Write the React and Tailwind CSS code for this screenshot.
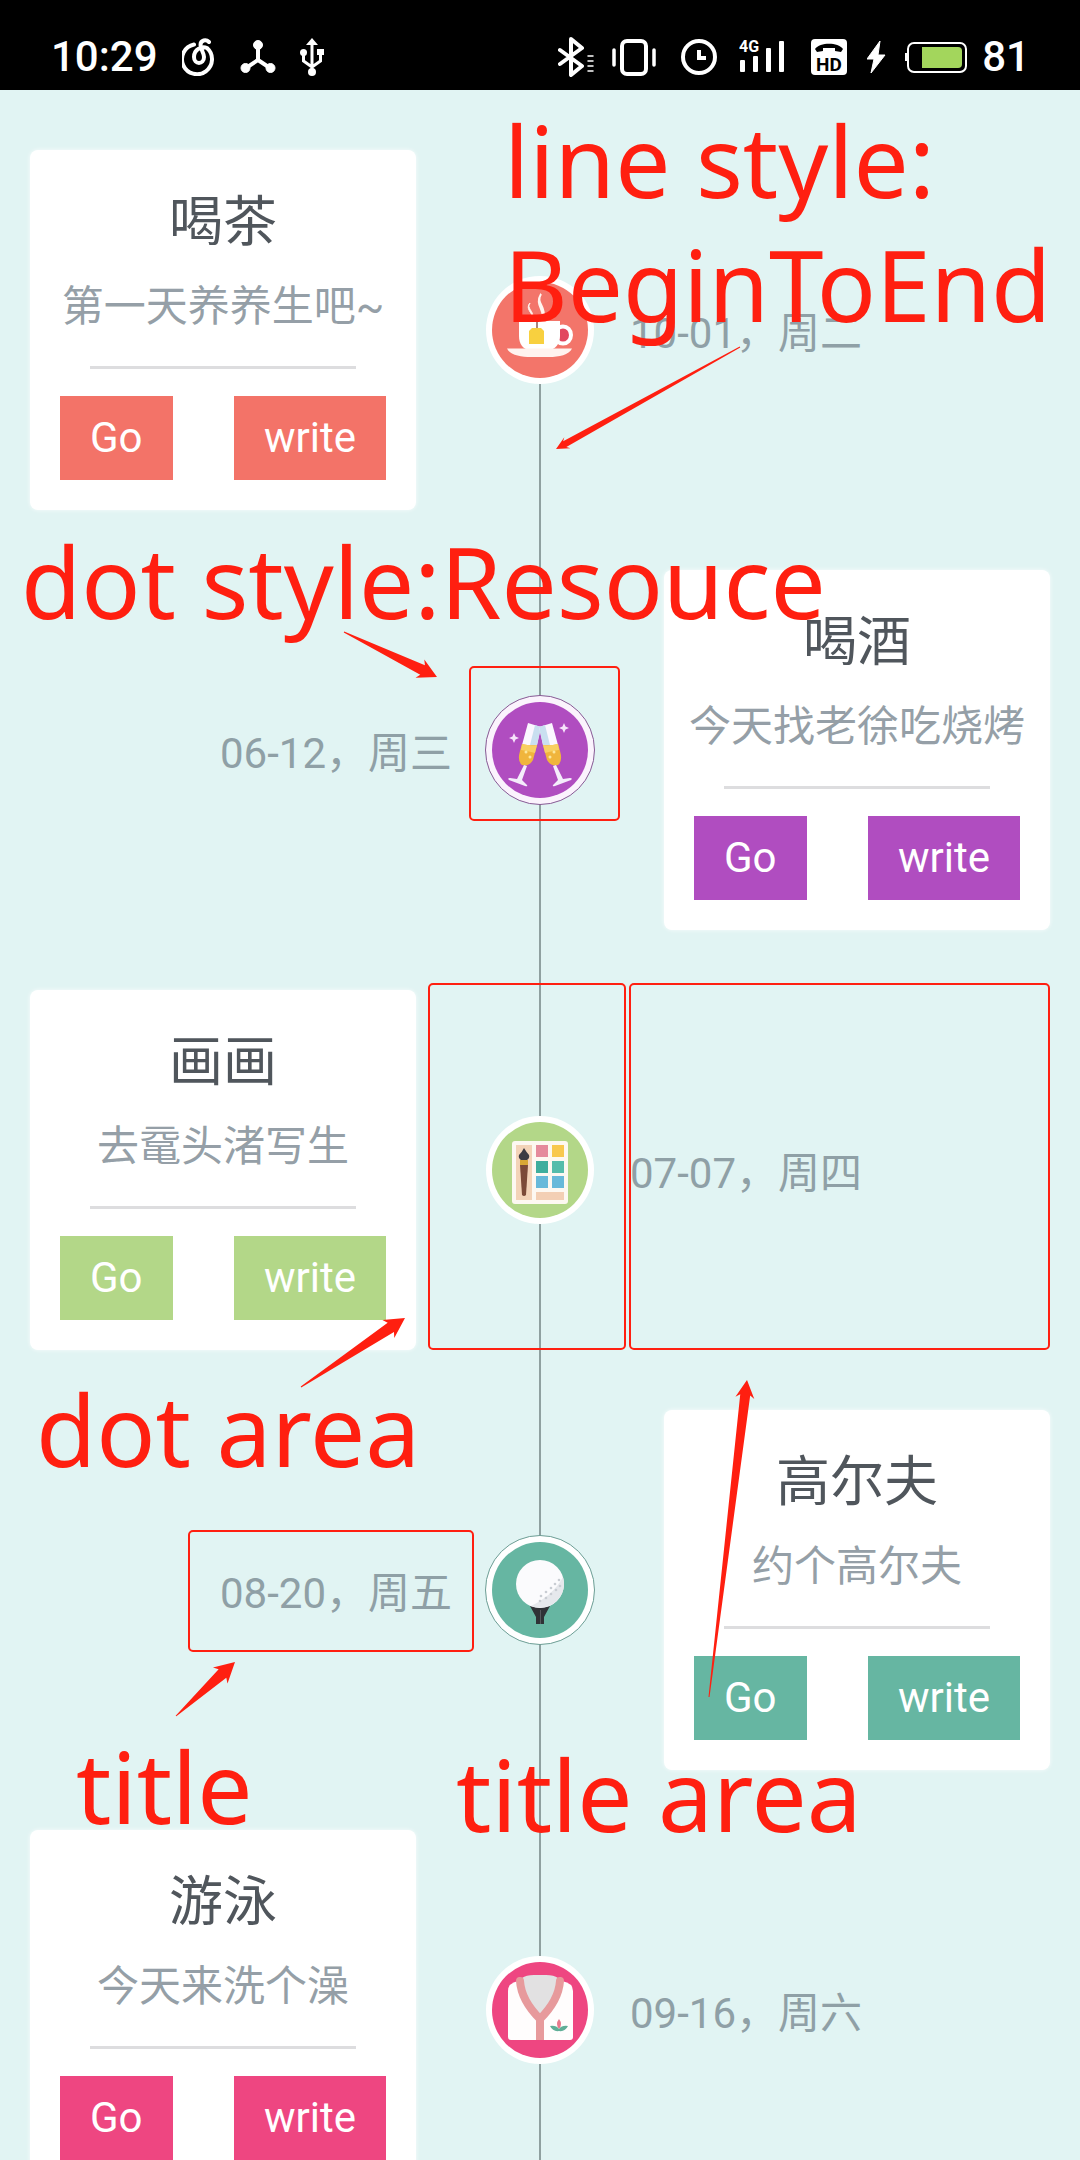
import React from "react";

const RED = "#ff1f10";

/* ---------- status bar icons ---------- */

function MusicIcon() {
  return (
    <svg width="34" height="38" viewBox="0 0 34 38" fill="none" stroke="#fff" strokeWidth="4" strokeLinecap="round">
      <path d="M12 6.500A15 15 0 1 0 25 10C20 8 12 11 12 19C12 27 22 27 22 19C22 15 18.500 11 18.500 7C18.500 2 24 1 27 4" />
    </svg>
  );
}

function HubIcon() {
  return (
    <svg width="36" height="38" viewBox="0 0 36 38" fill="#fff" stroke="#fff">
      <path d="M18 7V22L6 30M18 22L30 30" fill="none" strokeWidth="4" />
      <circle cx="18" cy="7" r="4.500" />
      <circle cx="5.500" cy="30" r="4.500" />
      <circle cx="30.500" cy="30" r="4.500" />
    </svg>
  );
}

function UsbIcon() {
  return (
    <svg width="24" height="38" viewBox="0 0 24 38" fill="#fff">
      <path d="M12 0L18 7H6Z" />
      <circle cx="12" cy="34" r="4" />
      <circle cx="3.500" cy="14.500" r="3.500" />
      <rect x="17" y="11" width="7" height="6" />
      <path d="M12 6V33M3.500 14V23L12 29M20.500 15V23L12 29" fill="none" stroke="#fff" strokeWidth="3" />
    </svg>
  );
}

function BluetoothIcon() {
  return (
    <svg width="39" height="40" viewBox="0 0 39 40" fill="none" stroke="#fff" strokeWidth="4" strokeLinejoin="round" strokeLinecap="round">
      <path d="M2 13L24 29L13 38V2L24 11L2 27" />
      <path d="M30 19H35M30 24H35M30 29H35M30 34H35" strokeWidth="1.500" />
    </svg>
  );
}

function VibrateIcon() {
  return (
    <svg width="54" height="38" viewBox="0 0 54 38" fill="none" stroke="#fff" strokeLinecap="round">
      <rect x="10" y="3" width="24" height="33" rx="5" strokeWidth="4" />
      <path d="M2 12V27M42 12V27" strokeWidth="3.500" />
    </svg>
  );
}

function ClockIcon() {
  return (
    <svg width="43" height="38" viewBox="0 0 43 38" fill="none" stroke="#fff" strokeWidth="4">
      <circle cx="18" cy="19" r="16" />
      <path d="M18 12V20H25" />
    </svg>
  );
}

function SignalIcon() {
  return (
    <svg width="57" height="38" viewBox="0 0 57 38" fill="#fff">
      <text x="0" y="14" fontSize="16" fontWeight="700" fontFamily="Roboto, sans-serif">4G</text>
      <rect x="1" y="22" width="5" height="12" rx="1" />
      <rect x="14" y="18" width="5" height="16" rx="1" />
      <rect x="27" y="10" width="5" height="24" rx="1" />
      <rect x="40" y="3" width="5" height="31" rx="1" />
    </svg>
  );
}

function HdIcon() {
  return (
    <svg width="41" height="38" viewBox="0 0 41 38">
      <rect x="0" y="1" width="36" height="36" rx="4" fill="#fff" />
      <path d="M4 11C9 4 27 4 32 11L30 14L24 13V10H12V13L6 14Z" fill="#000" />
      <text x="18" y="33" textAnchor="middle" fontSize="19" fontWeight="700" fontFamily="Roboto, sans-serif" fill="#000">HD</text>
    </svg>
  );
}

function BoltIcon() {
  return (
    <svg width="23" height="38" viewBox="0 0 23 38" fill="#fff">
      <path d="M13 3L0 21H7L4 35L18 17H11Z" stroke="#fff" strokeWidth="1" />
    </svg>
  );
}

function BatteryIcon() {
  return (
    <svg width="62" height="38" viewBox="0 0 62 38">
      <rect x="3" y="5" width="58" height="29" rx="6" fill="none" stroke="#fff" strokeWidth="2" />
      <rect x="0" y="15" width="3" height="8" fill="#fff" />
      <path d="M17 9H53Q57 9 57 13V26Q57 30 53 30H17Z" fill="#a3d65c" />
    </svg>
  );
}

/* ---------- timeline dots ---------- */

function Dot({ color, rim, ring = "#ffffff", label, children }) {
  return (
    <svg className="relative" width="112" height="112" viewBox="0 0 112 112" role="img" aria-label={label}>
      <circle cx="56" cy="56" r="54" fill={ring} />
      {rim && <circle cx="56" cy="56" r="54.500" fill="none" stroke={rim} strokeWidth="1" />}
      <circle cx="56" cy="56" r="48" fill={color} />
      {children}
    </svg>
  );
}

function TeaDot() {
  return (
    <Dot color="#f3756a" label="tea">
      <path d="M57 20C51 29 63 33 59 43C59 34 51 30 57 20Z" fill="#fff5ef" stroke="#fff5ef" strokeWidth="2" />
      <path d="M46 29C42 34 50 37 49 44C48 38 41 35 46 29Z" fill="#fff5ef" stroke="#fff5ef" strokeWidth="1" />
      <ellipse cx="79" cy="61" rx="8" ry="8.500" fill="#e2475f" stroke="#fff" strokeWidth="4" />
      <path d="M35 47H76V62C76 70 71 76 64 76H47C39 76 35 70 35 62Z" fill="#fff" />
      <path d="M23 74.500H88C85 81 75 83 65 83H47C37 83 26 81 23 74.500Z" fill="#fff3ef" />
      <path d="M53 47V56" stroke="#8a5b52" strokeWidth="1.500" />
      <path d="M48 54H57L60 57V70H45V57Z" fill="#f8d03f" />
    </Dot>
  );
}

function Glass() {
  return (
    <g>
      <path d="M44 29L57 33L53 51H38Z" fill="#fbf7ff" />
      <path d="M51 31L57 33L53 51H46Z" fill="#c9dff0" />
      <path d="M38 50Q46 52 53 51L49 66Q45 73 38 71Q33 67 36 57Z" fill="#f0b53c" />
      <path d="M38 50Q46 52 53 51L51 59Q44 57 37 56Z" fill="#f8cf62" />
      <circle cx="42" cy="58" r="1.500" fill="#fce79c" />
      <circle cx="46" cy="63" r="1.500" fill="#fce79c" />
      <path d="M40 71L43 72L38 86L43 91Q44 93 41 92L25 86Q23 84 26 84L33 85Z" fill="#f4ecfb" />
    </g>
  );
}

function WineDot() {
  return (
    <Dot color="#b04dc0" rim="#8a5a96" ring="#fbf3fd" label="champagne">
      <Glass />
      <g transform="matrix(-1 0 0 1 112 0)">
        <Glass />
      </g>
      <path d="M80 29L81.500 32.500L85 34L81.500 35.500L80 39L78.500 35.500L75 34L78.500 32.500Z" fill="#f6e4fa" />
      <path d="M30 39L31.500 42.500L35 44L31.500 45.500L30 49L28.500 45.500L25 44L28.500 42.500Z" fill="#f6e4fa" />
    </Dot>
  );
}

function PaintDot() {
  return (
    <Dot color="#b3d788" label="paint box">
      <rect x="28" y="27" width="56" height="63" rx="3" fill="#fdf8f1" />
      <rect x="32" y="31" width="16" height="55" fill="#f3d3b8" />
      <rect x="52" y="31" width="12" height="12" fill="#e58a9c" />
      <rect x="68" y="31" width="12" height="12" fill="#f8c84e" />
      <rect x="52" y="47" width="12" height="12" fill="#3fae9d" />
      <rect x="68" y="47" width="12" height="12" fill="#55bcab" />
      <rect x="52" y="62" width="12" height="12" fill="#68b9da" />
      <rect x="68" y="62" width="12" height="12" fill="#68b9da" />
      <rect x="52" y="78" width="28" height="8" fill="#f3cfb4" />
      <path d="M40 34Q43 39 45 41Q46 44 43 46H37Q34 44 35 41Q38 38 40 34Z" fill="#3c3a42" />
      <rect x="36" y="46" width="8" height="5" fill="#d9a835" />
      <path d="M36 51H44L42 81Q40 83 38 81Z" fill="#7c4a38" />
    </Dot>
  );
}

function GolfDot() {
  return (
    <Dot color="#66b6a2" rim="#6f9f96" label="golf ball">
      <path d="M46 72H66L60 83V90H52V83Z" fill="#2f3236" />
      <path d="M56.500 76V90" stroke="#55595d" strokeWidth="1" />
      <circle cx="56" cy="50" r="24" fill="#fbfbfd" />
      <path d="M79 43A24 24 0 0 1 47 72C60 66 72 56 79 43Z" fill="#e6e8ec" />
      <g fill="#c9cdd3">
        <circle cx="75" cy="46" r="1.300" />
        <circle cx="71" cy="50" r="1.300" />
        <circle cx="76" cy="52" r="1.300" />
        <circle cx="67" cy="54" r="1.300" />
        <circle cx="72" cy="56" r="1.300" />
        <circle cx="62" cy="58" r="1.300" />
        <circle cx="67" cy="60" r="1.300" />
        <circle cx="57" cy="62" r="1.300" />
        <circle cx="62" cy="64" r="1.300" />
        <circle cx="56" cy="67" r="1.300" />
      </g>
    </Dot>
  );
}

function RobeDot() {
  return (
    <Dot color="#ee4681" label="bathrobe">
      <path d="M34 27Q24 29 24 37V83Q24 86 27 86H86Q89 86 89 83V37Q89 29 78 27Z" fill="#fffdfd" />
      <path d="M38 24Q42 21 50 21H62Q70 21 74 24Q72 48 56 64Q40 48 38 24Z" fill="#e2e1e2" />
      <path d="M36 27C37 42 45 54 56 65C67 54 75 42 76 27" fill="none" stroke="#e79a9c" strokeWidth="8" strokeLinecap="round" />
      <rect x="52" y="63" width="8" height="23" fill="#e79a9c" />
      <path d="M75 65Q79 70 75 75Q71 70 75 65Z" fill="#e9788c" />
      <path d="M66 72Q72 71 75 75Q78 71 84 72Q81 78 75 77Q69 78 66 72Z" fill="#5fae97" />
    </Dot>
  );
}

/* ---------- timeline ---------- */

const items = [
  { title: "喝茶", note: "第一天养养生吧~", date: "10-01，周二", tint: "bg-[#f37368]", Icon: TeaDot },
  { title: "喝酒", note: "今天找老徐吃烧烤", date: "06-12，周三", tint: "bg-[#b04dc0]", Icon: WineDot, dotFrame: "mark" },
  { title: "画画", note: "去鼋头渚写生", date: "07-07，周四", tint: "bg-[#b3d788]", Icon: PaintDot, dotFrame: "area", titleArea: true },
  { title: "高尔夫", note: "约个高尔夫", date: "08-20，周五", tint: "bg-[#66b6a2]", Icon: GolfDot, titleMark: true },
  { title: "游泳", note: "今天来洗个澡", date: "09-16，周六", tint: "bg-[#ee4681]", Icon: RobeDot },
];

const frame = "pointer-events-none absolute rounded-[5px] border-2 border-[#ff1f10]";

function Card({ item }) {
  const button = "m-[30px] px-[30px] h-[84px] text-[42px] leading-[48px] text-white " + item.tint;
  return (
    <article className="flex flex-col rounded-lg bg-white pt-[33px] text-center shadow-[0_0_4px_rgba(255,255,255,0.8)]">
      <h2 className="text-[54px] leading-[80px] text-[#50565c]">{item.title}</h2>
      <p className="mt-3.5 whitespace-nowrap text-[42px] leading-[60px] text-[#959fa7]">{item.note}</p>
      <hr className="mx-[60px] mt-[29px] border-t-[3px] border-[#dddddf]" />
      <div className="-mt-[3px] flex justify-between">
        <button type="button" className={button}>Go</button>
        <button type="button" className={button}>write</button>
      </div>
    </article>
  );
}

function Row({ item, index }) {
  const cardLeft = index % 2 === 0;
  const { Icon } = item;
  const first = index === 0;
  const card = (
    <div className={cardLeft ? "mr-[34px]" : "ml-[34px]"}>
      <Card item={item} />
    </div>
  );
  const date = (
    <div className={"relative flex items-center pt-2 " + (cardLeft ? "justify-start" : "-mr-0.5 justify-end")}>
      <time className="relative whitespace-nowrap text-[42px] leading-[60px] text-[#8fa0a6]">
        {item.date}
        {item.titleMark && <span className={frame + " -left-8 -right-[22px] -top-[34px] -bottom-7"} />}
      </time>
      {item.titleArea && <span className={frame + " -left-px right-0 -top-[7px] bottom-0"} />}
    </div>
  );
  return (
    <li className="grid grid-cols-[1fr_180px_1fr] pb-[60px]">
      {cardLeft ? card : date}
      <div className="relative flex items-center justify-center">
        <span className={"absolute -bottom-[60px] left-1/2 w-[2px] -translate-x-1/2 bg-[#8fa0a0] " + (first ? "top-1/2" : "top-0")} />
        <Icon />
        {item.dotFrame === "mark" && <span className={frame + " left-[19px] right-[10px] top-[96px] bottom-[109px]"} />}
        {item.dotFrame === "area" && <span className={frame + " -left-[22px] right-1 -top-[7px] bottom-0"} />}
      </div>
      {cardLeft ? date : card}
    </li>
  );
}

/* ---------- callouts over the timeline ---------- */

function Arrow({ from, to, head = 16 }) {
  const [x1, y1] = from;
  const [x2, y2] = to;
  const len = Math.hypot(x2 - x1, y2 - y1);
  const angle = (Math.atan2(y2 - y1, x2 - x1) * 180) / Math.PI;
  const w = head / 3;
  const points = [
    [0, -0.5], [len - head, -w], [len - head - 3, -w * 1.9], [len, 0],
    [len - head - 3, w * 1.9], [len - head, w], [0, 0.5],
  ].join(" ");
  return <polygon points={points} fill={RED} transform={`translate(${x1} ${y1}) rotate(${angle})`} />;
}

function Label({ place, children }) {
  return (
    <span className={"absolute whitespace-nowrap font-['Noto_Sans','Open_Sans',sans-serif] text-[98px] leading-[124px] text-[#ff1f10] " + place}>
      {children}
    </span>
  );
}

function Callouts() {
  return (
    <div className="pointer-events-none absolute inset-0">
      <Label place="left-[504px] top-[8px]">line style:<br />BeginToEnd</Label>
      <Label place="left-[21px] top-[429px]">dot style:Resouce</Label>
      <Label place="left-[36px] top-[1277px]">dot area</Label>
      <Label place="left-[76px] top-[1634px]">title</Label>
      <Label place="left-[456px] top-[1642px]">title area</Label>
      <svg className="absolute left-0 top-0" width="1080" height="2070" viewBox="0 90 1080 2070">
        <Arrow from={[740, 347]} to={[556, 449]} head={10} />
        <Arrow from={[344, 632]} to={[437, 677]} head={16} />
        <Arrow from={[301, 1387]} to={[405, 1318]} head={17} />
        <Arrow from={[176, 1716]} to={[235, 1662]} head={17} />
        <Arrow from={[709, 1697]} to={[747, 1380]} head={15} />
      </svg>
    </div>
  );
}

export default function App() {
  return (
    <div className="flex h-screen flex-col overflow-hidden bg-[#e1f4f3] font-['Roboto','Noto_Sans_CJK_SC',sans-serif]">
      <header className="flex h-[90px] shrink-0 items-center justify-between bg-black pl-[51px] pr-[50px] pt-6 text-[42px] font-medium leading-[48px] text-white">
        <div className="flex items-center gap-6">
          <span>10:29</span>
          <MusicIcon />
          <HubIcon />
          <UsbIcon />
        </div>
        <div className="flex items-center gap-[15px]">
          <BluetoothIcon />
          <VibrateIcon />
          <ClockIcon />
          <SignalIcon />
          <HdIcon />
          <BoltIcon />
          <BatteryIcon />
          <span>81</span>
        </div>
      </header>
      <main className="relative min-h-0 flex-1 overflow-hidden">
        <ol className="px-[30px] pt-[60px]">
          {items.map((item, i) => (
            <Row key={item.title} item={item} index={i} />
          ))}
        </ol>
        <Callouts />
      </main>
    </div>
  );
}
